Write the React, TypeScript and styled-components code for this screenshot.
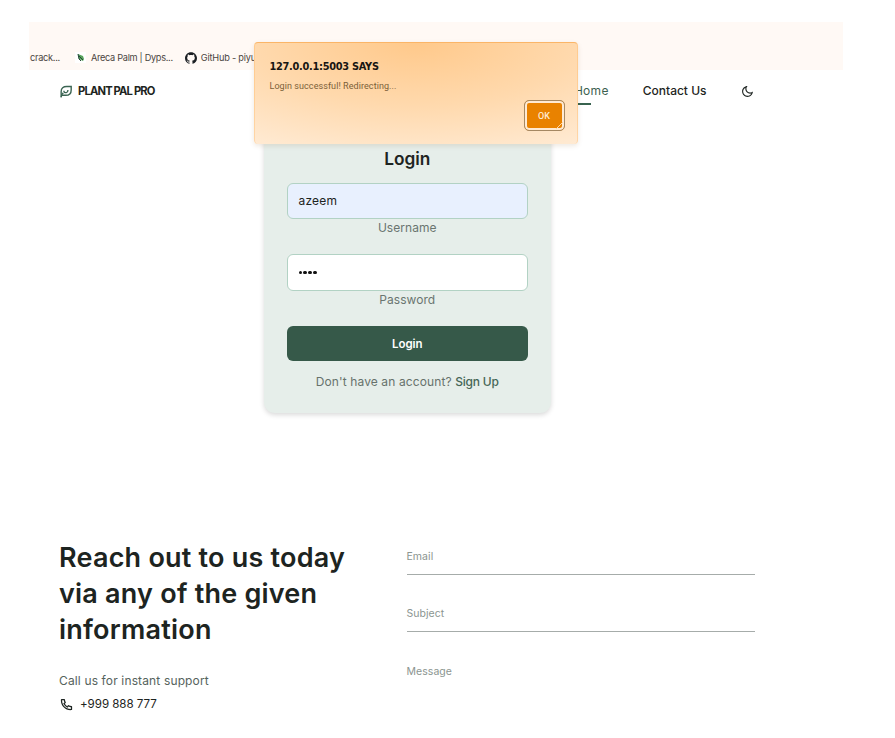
import React from 'react';
import styled, { createGlobalStyle } from 'styled-components';
import { RiMoonLine, RiPhoneLine } from 'react-icons/ri';
import { SiGithub } from 'react-icons/si';

const GlobalStyle = createGlobalStyle`
  * { box-sizing: border-box; }
  body { margin: 0; background: #fff; font-family: Inter, "Liberation Sans", sans-serif; color: #1d2421; }
  h1, h2, h3, p { margin: 0; }
`;

const Page = styled.div`
  position: relative;
  width: 895px;
  height: 738px;
  padding: 22px 52px 0 29px;
  overflow: hidden;
`;

const BookmarksBar = styled.div`
  display: flex;
  align-items: flex-end;
  height: 48px;
  padding: 0 0 5px 1px;
  background: #fff9f5;
  overflow: hidden;
`;

const Bookmark = styled.div<{ $gap: number; $after: number; $spacing: number }>`
  display: flex;
  align-items: center;
  gap: ${(p) => p.$gap}px;
  height: 15px;
  margin-right: ${(p) => p.$after}px;
  font-size: 9.2px;
  letter-spacing: ${(p) => p.$spacing}px;
  white-space: nowrap;
  color: #4a4541;
`;

const Favicon = styled.span`
  display: flex;
  align-items: center;
  justify-content: center;
  width: 11px;
  height: 11px;
  background: #fff;
`;

const Header = styled.header`
  display: flex;
  align-items: center;
  justify-content: space-between;
  height: 42px;
  padding: 0 89px 0 30px;
`;

const Brand = styled.div`
  display: flex;
  align-items: center;
  gap: 6px;
  font-size: 11.2px;
  font-weight: 700;
  letter-spacing: -0.83px;
  white-space: nowrap;

  svg { color: #3b6553; }
`;

const Nav = styled.nav`
  display: flex;
  align-items: center;
`;

const NavLink = styled.a<{ $active?: boolean; $after: number }>`
  position: relative;
  margin-right: ${(p) => p.$after}px;
  font-size: 12px;
  line-height: 18px;
  font-weight: ${(p) => (p.$active ? 400 : 500)};
  letter-spacing: ${(p) => (p.$active ? 0.3 : 0)}px;
  color: ${(p) => (p.$active ? '#3d5f50' : '#1d2421')};
`;

const ActiveLine = styled.span`
  position: absolute;
  left: 0;
  bottom: -5px;
  width: 50%;
  height: 2px;
  background: #38634f;
`;

const LoginCard = styled.form`
  display: flex;
  flex-direction: column;
  width: 287px;
  height: 301px;
  margin-left: 234.5px;
  padding: 34px 22.5px 0 23px;
  border-radius: 11px;
  background: #e6eeea;
  box-shadow: 0 2px 5px rgba(0, 0, 0, 0.15);
  text-align: center;
`;

const CardTitle = styled.h2`
  height: 36.5px;
  font-size: 17.3px;
  line-height: 26px;
  font-weight: 600;
`;

const Field = styled.div`
  height: 71.8px;
`;

const FieldValue = styled.div<{ $filled?: boolean }>`
  display: flex;
  align-items: center;
  gap: 1.8px;
  height: 36.5px;
  padding: 0 11px;
  border: 1px solid #b2d2c4;
  border-radius: 6px;
  background: ${(p) => (p.$filled ? '#e8f0fe' : '#fff')};
  font-size: 12px;
  letter-spacing: 0.2px;
`;

const Dot = styled.i`
  width: 3.2px;
  height: 3.2px;
  border-radius: 50%;
  background: #111;
`;

const FieldLabel = styled.label`
  display: block;
  font-size: 12px;
  line-height: 18px;
  letter-spacing: 0.05px;
  color: #6a7570;
`;

const SubmitButton = styled.button`
  height: 35px;
  border: 0;
  border-radius: 6px;
  background: #365949;
  color: #fff;
  font: 600 11.5px Inter, sans-serif;
`;

const SignUpPrompt = styled.p`
  margin-top: 12px;
  font-size: 12px;
  line-height: 18px;
  letter-spacing: 0.11px;
  color: #67726c;
  white-space: nowrap;

  a { color: #456656; font-weight: 500; letter-spacing: -0.2px; }
`;

const Contact = styled.section`
  display: grid;
  grid-template-columns: 347.5px 348px;
  margin-top: 126px;
  padding-left: 30px;
`;

const ContactTitle = styled.h1`
  padding-top: 1px;
  font-size: 27px;
  line-height: 36.2px;
  font-weight: 600;
  letter-spacing: 0.22px;
  white-space: nowrap;
`;

const SupportText = styled.p`
  margin-top: 23px;
  font-size: 12px;
  line-height: 18px;
  letter-spacing: 0.14px;
  color: #56635d;
`;

const Phone = styled.p`
  display: flex;
  align-items: center;
  gap: 6px;
  margin-top: 5.4px;
  font-size: 11.6px;
  line-height: 18px;
  letter-spacing: -0.05px;
`;

const ContactForm = styled.div`
  padding-top: 8px;
`;

const LineField = styled.div<{ $last?: boolean }>`
  height: 28px;
  margin-bottom: 29.3px;
  padding-top: 1px;
  border-bottom: ${(p) => (p.$last ? '0' : '1px solid #a6acaa')};
  font-size: 10.5px;
  line-height: 18px;
  letter-spacing: 0.05px;
  color: #8b9590;
`;

const Dialog = styled.div`
  position: absolute;
  left: 254px;
  top: 42px;
  width: 323.5px;
  height: 102px;
  padding: 17px 12px 0 14.5px;
  border: 1px solid rgba(255, 178, 90, 0.35);
  border-top: 1.5px solid #fbb567;
  border-bottom: 0;
  border-radius: 4px;
  background: radial-gradient(ellipse 320px 125px at 50% 0, #ffc98b 0%, #ffd9ad 50%, #ffecd7 100%);
  box-shadow: 0 2px 5px rgba(120, 75, 20, 0.13);
`;

const DialogTitle = styled.h3`
  font: 700 9.8px/14px "DejaVu Sans", sans-serif;
  letter-spacing: -0.28px;
  color: #171512;
  white-space: nowrap;
`;

const DialogText = styled.p`
  margin-top: 5px;
  font: 9px/14px Roboto, sans-serif;
  letter-spacing: 0.07px;
  color: #7b6038;
`;

const DialogActions = styled.div`
  display: flex;
  justify-content: flex-end;
  margin-top: 7px;
`;

const OkButton = styled.button`
  position: relative;
  width: 41px;
  height: 31px;
  padding: 0;
  border: 1.5px solid #a58863;
  border-radius: 5px;
  background: #e98200;
  box-shadow: inset 0 0 0 2px #ffead3;
  color: #ffead3;
  font: 500 9px Roboto, sans-serif;

  svg { position: absolute; right: 1px; bottom: 1px; }
`;

function LeafLogo() {
  return (
    <svg width="13" height="13" viewBox="0 0 24 24" fill="none" stroke="currentColor" strokeWidth="2.6">
      <path d="M4 22.500V12C4 6 8 2.800 14 2.800h8.500V9c0 6-4 10-10 10H4" />
      <path d="M4 22.500c0-4 1-6 4-8M9 10.500c0 3 2 4 4.500 3.500 2-.5 3-2.500 3-5" />
    </svg>
  );
}

export default function App() {
  return (
    <>
      <GlobalStyle />
      <Page>
        <BookmarksBar>
          <Bookmark $gap={0} $after={15.5} $spacing={-0.27}>crack...</Bookmark>
          <Bookmark $gap={4.5} $after={12} $spacing={-0.3}>
            <Favicon>
              <svg width="8" height="9" viewBox="0 0 8 9">
                <path d="M1 1l5 2 1 3-1 2-4-2z" fill="#58a55c" />
                <path d="M1 1l1 5 2 2M2 3l4 4" stroke="#26483a" strokeWidth="1" fill="none" />
              </svg>
            </Favicon>
            Areca Palm | Dyps...
          </Bookmark>
          <Bookmark $gap={4} $after={0} $spacing={-0.2}>
            <SiGithub size={12} color="#1b1f23" />
            GitHub - piyu
          </Bookmark>
        </BookmarksBar>

        <Header>
          <Brand>
            <LeafLogo />
            PLANT PAL PRO
          </Brand>
          <Nav>
            <NavLink $active $after={34}>
              Home
              <ActiveLine />
            </NavLink>
            <NavLink $after={34.5}>Contact Us</NavLink>
            <RiMoonLine size={13} />
          </Nav>
        </Header>

        <LoginCard>
          <CardTitle>Login</CardTitle>
          <Field>
            <FieldValue $filled>azeem</FieldValue>
            <FieldLabel>Username</FieldLabel>
          </Field>
          <Field>
            <FieldValue>
              <Dot />
              <Dot />
              <Dot />
              <Dot />
            </FieldValue>
            <FieldLabel>Password</FieldLabel>
          </Field>
          <SubmitButton type="button">Login</SubmitButton>
          <SignUpPrompt>
            Don't have an account? <a>Sign Up</a>
          </SignUpPrompt>
        </LoginCard>

        <Contact>
          <div>
            <ContactTitle>
              Reach out to us today
              <br />
              via any of the given
              <br />
              information
            </ContactTitle>
            <SupportText>Call us for instant support</SupportText>
            <Phone>
              <RiPhoneLine size={15} />
              +999 888 777
            </Phone>
          </div>
          <ContactForm>
            <LineField>Email</LineField>
            <LineField>Subject</LineField>
            <LineField $last>Message</LineField>
          </ContactForm>
        </Contact>

        <Dialog>
          <DialogTitle>127.0.0.1:5003 SAYS</DialogTitle>
          <DialogText>Login successful! Redirecting...</DialogText>
          <DialogActions>
            <OkButton>
              OK
              <svg width="7" height="7" viewBox="0 0 7 7">
                <path d="M0 7L7 0" stroke="#ffd6a5" strokeWidth="1" />
              </svg>
            </OkButton>
          </DialogActions>
        </Dialog>
      </Page>
    </>
  );
}
